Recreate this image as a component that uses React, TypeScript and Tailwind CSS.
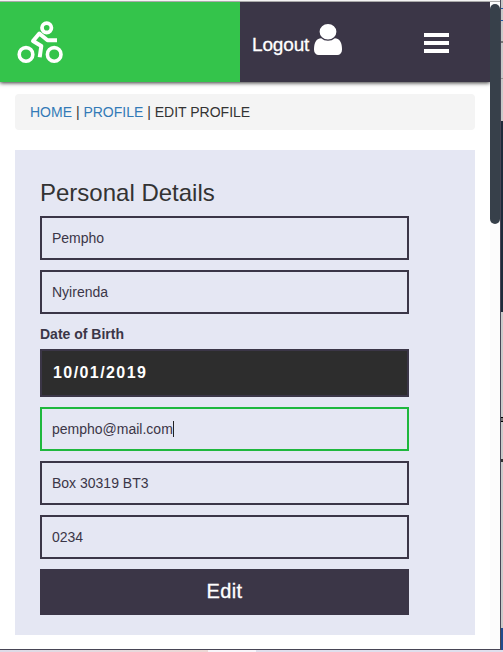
import React from "react";

function CyclistLogo() {
  return (
    <svg className="ml-[17px] mt-[18px] block" width="46" height="44" viewBox="17 20 46 44" fill="none" stroke="#fff">
      <circle cx="26" cy="54.4" r="6.8" strokeWidth="3.6" />
      <circle cx="54.2" cy="54.4" r="6.8" strokeWidth="3.6" />
      <circle cx="46.7" cy="27.8" r="4.7" strokeWidth="3.8" />
      <path d="M57 40.2H47.5L39.3 33.5L33 41L41.3 46L39.7 57.2" strokeWidth="4" strokeLinejoin="round" />
    </svg>
  );
}

function UserIcon() {
  return (
    <svg className="mb-[27px] ml-[5px] block" width="28" height="31" viewBox="0 128 1280 1536" preserveAspectRatio="none" fill="#fff">
      <path d="M1280 1399q0 109-62.5 187t-150.5 78h-854q-88 0-150.5-78t-62.5-187q0-85 8.5-160.5t31.5-152t58.5-131t94-89t134.5-34.5q131 128 313 128t313-128q76 0 134.5 34.5t94 89t58.5 131t31.5 152t8.5 160.5zM1024 512q0 159-112.5 271.5t-271.5 112.5t-271.5-112.5t-112.5-271.5t112.5-271.5t271.5-112.5t271.5 112.5t112.5 271.5z" />
    </svg>
  );
}

function Field({ value, active = false }: { value: string; active?: boolean }) {
  return (
    <div className={`mb-[10px] flex h-11 items-center border-2 px-[10px] text-sm leading-5 ${active ? "border-[#1fb83d]" : "border-[#3b3647]"}`}>
      <span>{value}</span>
      {active && <span className="h-4 w-px bg-[#222]" />}
    </div>
  );
}

export default function App() {
  return (
    <div className="flex h-[652px] w-[503px] flex-col overflow-hidden bg-white font-['Liberation_Sans',Arial,sans-serif] text-[#3b3647]">
      <div className="flex h-[650px]">
        <div className="flex w-[500px] flex-col border-b border-[#484555]">
          <div className="h-0.5 shrink-0 border-b border-[#aaa] bg-[#f4f4f4]" />
          <div className="flex min-h-0 flex-1">
            <main className="w-[490px] overflow-hidden">
              <header className="flex h-20 shadow-[0_1px_4px_rgba(0,0,0,0.8)]">
                <div className="w-60 bg-[#34c44b]">
                  <CyclistLogo />
                </div>
                <div className="flex w-[250px] bg-[#3b3647] text-white">
                  <a className="ml-3 flex items-end">
                    <span className="mb-[25px] w-[57px] whitespace-nowrap text-[19px] leading-6 tracking-[-0.15px] [-webkit-text-stroke:0.3px_white]">Logout</span>
                    <UserIcon />
                  </a>
                  <div className="ml-[82px] mt-[31px] flex flex-col gap-1">
                    <span className="h-1 w-[25px] bg-white" />
                    <span className="h-1 w-[25px] bg-white" />
                    <span className="h-1 w-[25px] bg-white" />
                  </div>
                </div>
              </header>
              <nav className="mx-[15px] mt-3 flex h-9 items-center rounded bg-[#f4f4f4] px-[15px] text-sm leading-5 text-[#333]">
                <p>
                  <a className="text-[#337ab7]">HOME</a> | <a className="text-[#337ab7]">PROFILE</a> | EDIT PROFILE
                </p>
              </nav>
              <section className="mx-[15px] mt-5 h-[485px] bg-[#e5e7f3] pl-[25px] pr-[66px] pt-[30px]">
                <h3 className="mb-[10px] text-2xl leading-[26px] text-[#333]">Personal Details</h3>
                <Field value="Pempho" />
                <Field value="Nyirenda" />
                <div className="mb-[5px] h-5 text-sm font-bold leading-5">Date of Birth</div>
                <div className="mb-[10px] flex h-12 items-center border-2 border-[#3b3647] bg-[#2d2d2d] px-[11px] text-base font-bold tracking-[1.42px] text-white">
                  10/01/2019
                </div>
                <Field value="pempho@mail.com" active />
                <Field value="Box 30319 BT3" />
                <Field value="0234" />
                <button className="block h-[46px] w-full bg-[#3b3647] pb-0.5 text-xl tracking-[0.4px] text-white [-webkit-text-stroke:0.3px_white]">Edit</button>
              </section>
            </main>
            <div className="w-[10px] bg-[#fcfcfc] pt-0.5">
              <div className="h-[220px] rounded-[5px] bg-[#37404a]" />
            </div>
          </div>
        </div>
        <div className="w-px bg-[#484555]" />
        <div className="flex w-0.5 flex-col overflow-hidden bg-[#cacaca]">
          <div className="h-2 shrink-0" />
          <div className="h-px shrink-0 bg-[#2459a5]" />
          <div className="h-[11px] shrink-0" />
          <div className="h-px shrink-0 bg-[#2459a5]" />
          <div className="h-5 shrink-0" />
          <div className="h-0.5 shrink-0 bg-[#777]" />
          <div className="h-[35px] shrink-0" />
          <div className="h-px shrink-0 bg-[#999]" />
          <div className="h-[42px] shrink-0" />
          <div className="h-[191px] shrink-0 bg-[#1f2a3a]" />
          <div className="h-[105px] shrink-0" />
          <div className="h-[5px] shrink-0 border-y border-black bg-[#777]" />
          <div className="h-[37px] shrink-0" />
          <div className="h-[3px] shrink-0 bg-[#333]" />
          <div className="h-[166px] shrink-0" />
          <div className="h-[22px] shrink-0 bg-[#204b8e]" />
        </div>
      </div>
      <div className="flex h-0.5">
        <div className="w-[208px] bg-linear-to-r from-[#dddbe8] to-[#edd8d5]" />
        <div className="w-12 bg-[#f8f5fa]" />
        <div className="flex-1 bg-[#dfdfed]" />
      </div>
    </div>
  );
}
